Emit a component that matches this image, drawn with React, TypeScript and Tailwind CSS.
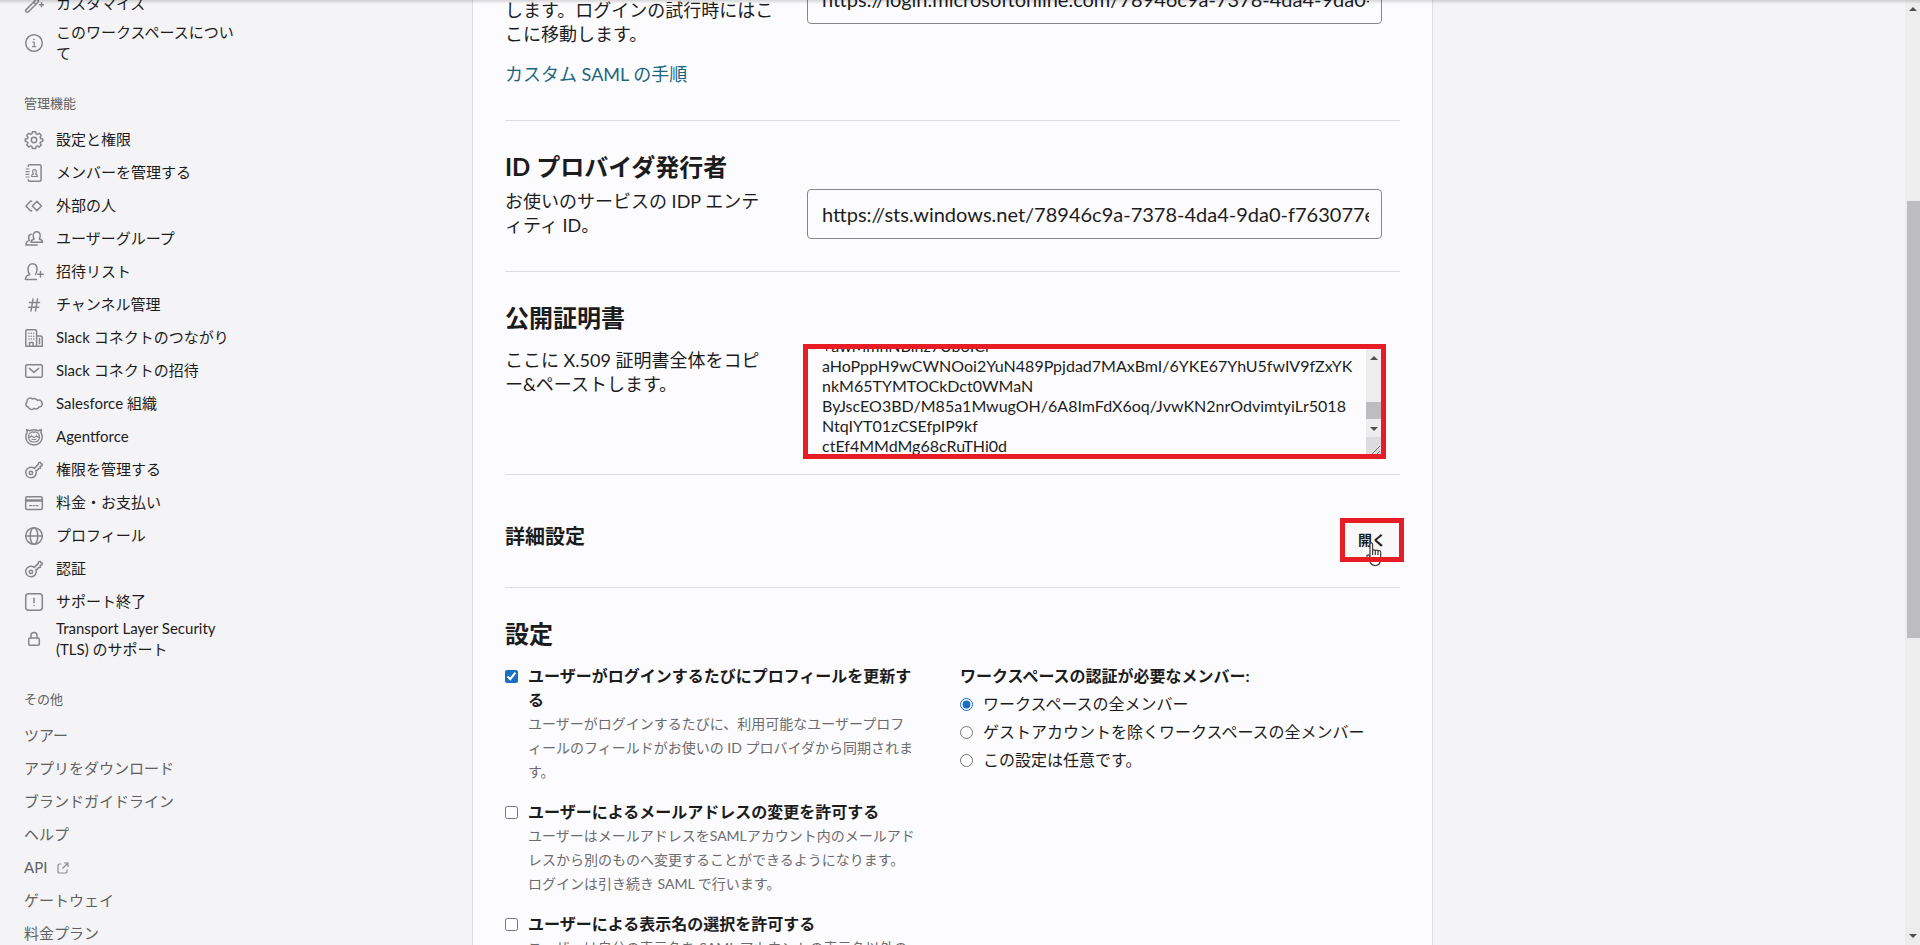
import React, { FunctionComponent, ReactNode } from "react";

interface IconProps {
  children: ReactNode;
}

const Icon: FunctionComponent<IconProps> = ({ children }) => (
  <svg
    viewBox="0 0 20 20"
    className="size-5 shrink-0 text-[#868688]"
    fill="none"
    stroke="currentColor"
    strokeWidth="1.5"
    strokeLinecap="round"
    strokeLinejoin="round"
    aria-hidden="true"
  >
    {children}
  </svg>
);

const keyIcon = (
  <Icon>
    <circle cx="6.9" cy="12.9" r="1.7" />
    <path d="M10.300 8.400 14.300 4.400l.2-1.500 1.800-.6.600 1.300 1.400.6-.6 1.800-1.500.2.200 2-2 .5-1 1.600-1.500.3a5.300 5.300 0 1 1-1.600-2.200" />
  </Icon>
);

const workspaceLinks = [
  {
    label: "カスタマイズ",
    icon: (
      <Icon>
        <path d="m2.2 15.6 9.6-9.6c.7-.7 1.6-.7 2.200 0s.7 1.500 0 2.200l-9.600 9.600c-.6.600-1.600.600-2.200 0s-.6-1.600 0-2.200ZM9.800 8l2.200 2.200" />
        <path d="M15.500 1v3M17.500 8.800v4M15.500 10.800h4M7 2.500v2" />
      </Icon>
    ),
  },
  {
    label: "このワークスペースについて",
    icon: (
      <Icon>
        <circle cx="10" cy="10" r="8.3" />
        <path d="M8.700 9h1.500v4.700M8.500 13.700h3.400" strokeWidth="1.200" />
        <circle cx="10" cy="6.400" r=".5" fill="currentColor" strokeWidth=".6" />
      </Icon>
    ),
  },
];

const adminLinks = [
  {
    label: "設定と権限",
    icon: (
      <Icon>
        <circle cx="10" cy="10" r="2.700" />
        <path d="M8.400 1.800h3.200l.5 2.100 1.200.5 1.900-1.100 2 2-1.100 1.900.5 1.200 2.100.5v2.400l-2.100.6-.5 1.200 1.100 1.900-2 2-1.900-1.100-1.200.5-.5 2.100H8.400l-.5-2.100-1.200-.5-1.900 1.100-2-2 1.100-1.900-.5-1.200-2.100-.6V8.900l2.100-.5.5-1.200-1.100-1.900 2-2 1.900 1.100 1.200-.5Z" />
      </Icon>
    ),
  },
  {
    label: "メンバーを管理する",
    icon: (
      <Icon>
        <path d="M4.200 3.300c0-.8.6-1.500 1.500-1.500h9.800c.9 0 1.600.7 1.600 1.500v13.400c0 .8-.7 1.500-1.600 1.500H5.700c-.9 0-1.500-.7-1.500-1.500" />
        <path d="M2 6h3M2 8.700h3M2 11.300h3M2 14h3" strokeWidth="1.200" />
        <path d="M7.500 13.500h6c0-1.500-1-2.200-2-2.600.6-.6.8-1.300.8-2.200 0-1.200-.7-2-1.800-2s-1.800.8-1.800 2c0 .9.200 1.600.8 2.200-1 .4-2 1.100-2 2.600Z" strokeWidth="1.200" />
      </Icon>
    ),
  },
  {
    label: "外部の人",
    icon: (
      <Icon>
        <path d="M7.700 5.200H6.400L2 10l4.400 4.800h1.300M12.800 5.400 8.300 10l4.500 4.600 4.700-4.600-4.700-4.600Z" />
      </Icon>
    ),
  },
  {
    label: "ユーザーグループ",
    icon: (
      <Icon>
        <path d="M10.200 10c-.7-1-1-2.100-1-3.300 0-2.400 1.300-4 3.500-4s3.500 1.600 3.500 4c0 1.200-.3 2.300-1 3.300 2.300.5 3.400 1.500 3.400 3.300H7c0-1.800 1-2.800 3.200-3.300Z" />
        <path d="M7.200 5.300C5.400 5.600 4.600 7 4.600 8.700c0 1 .2 1.900.8 2.700-2.300.7-3.500 2-3.500 4.500h11.300" />
      </Icon>
    ),
  },
  {
    label: "招待リスト",
    icon: (
      <Icon>
        <path d="M12.500 17.600H1.400c0-2.900 1.400-4.200 4.300-5C4.600 11.300 4 9.600 4 7.500 4 4.200 5.600 1.800 8.500 1.800S13 4.200 13 7.500c0 2-.5 3.600-1.500 4.900M13.700 12.300h5.600M16.500 9.500v5.600" />
      </Icon>
    ),
  },
  {
    label: "チャンネル管理",
    icon: (
      <Icon>
        <path d="M9 4 7 16M13.500 4l-2 12M5.500 7.600h10M4.700 12.200h10" />
      </Icon>
    ),
  },
  {
    label: "Slack コネクトのつながり",
    icon: (
      <Icon>
        <path d="M1.800 18.200V3.300c0-.8.700-1.500 1.500-1.500h7.800c.8 0 1.500.7 1.500 1.500v14.900H1.800ZM12.600 8h4.100c.8 0 1.500.7 1.500 1.500v8.700h-5.600" />
        <path d="M5.500 18v-3.500h3.600V18M15.500 10.500v5.200" />
        <path d="M5 5.300h.1M7.300 5.300h.1M9.600 5.300h.1M5 8.200h.1M7.300 8.200h.1M9.600 8.200h.1M5 11h.1M7.300 11h.1M9.600 11h.1" />
      </Icon>
    ),
  },
  {
    label: "Slack コネクトの招待",
    icon: (
      <Icon>
        <rect x="1.700" y="3.700" width="16.600" height="12.600" rx="1.600" />
        <path d="m5.400 7.400 4.600 4 4.600-4" />
      </Icon>
    ),
  },
  {
    label: "Salesforce 組織",
    icon: (
      <Icon>
        <path d="M8.300 5C6.300 3.200 2.700 4.300 3 7.800c-2 1.500-1.500 4.900 1.200 5.200 1 2.700 4.400 3.200 6 1.300 1.800 1.200 4 .5 4.700-1.300 2.800.3 4.200-3 2.800-5.200-1-1.700-2.800-2-4.200-1.400-1-1.800-3.700-2.400-5.200-1.400Z" />
      </Icon>
    ),
  },
  {
    label: "Agentforce",
    icon: (
      <Icon>
        <path d="M3.200 5.200 2.600 2.600l3 1.200c2.700-1.400 6.100-1.400 8.800 0l3-1.200-.6 2.600c1 1.300 1.400 3 1.400 4.800 0 4.600-3.400 8-8.200 8s-8.200-3.400-8.200-8c0-1.800.4-3.500 1.400-4.800Z" />
        <path d="M10 5.500c-1-1-5.500-.5-5.500 4.500 0 3.500 2.500 5 5.500 5s5.500-1.500 5.500-5c0-5-4.500-5.500-5.500-4.500ZM5.500 10.500c1-1.500 3-1.500 4 0M10.500 10.500c1-1.500 3-1.500 4 0M8 12.500h4M7.500 8h.1M12.500 8h.1" strokeWidth="1.200" />
      </Icon>
    ),
  },
  { label: "権限を管理する", icon: keyIcon },
  {
    label: "料金・お支払い",
    icon: (
      <Icon>
        <rect x="1.700" y="3.700" width="16.600" height="12.800" rx="1.600" />
        <path d="M2 6.900h16M2 8h16" />
        <path d="M5.500 12.700h2M9 12.700h1.500M12 12.700h2" strokeWidth="1.200" />
      </Icon>
    ),
  },
  {
    label: "プロフィール",
    icon: (
      <Icon>
        <circle cx="10" cy="10" r="8.300" />
        <ellipse cx="10" cy="10" rx="3.800" ry="8.300" />
        <path d="M1.700 10h16.600" />
      </Icon>
    ),
  },
  { label: "認証", icon: keyIcon },
  {
    label: "サポート終了",
    icon: (
      <Icon>
        <rect x="1.700" y="1.700" width="16.600" height="16.600" rx="3" />
        <path d="M10 6.300v4.500M10 13.500v.1" />
      </Icon>
    ),
  },
  {
    label: "Transport Layer Security (TLS) のサポート",
    icon: (
      <Icon>
        <rect x="4.700" y="9" width="10.600" height="7.200" rx="1.200" />
        <path d="M7 9V6.500c0-1.800 1.200-3 3-3s3 1.200 3 3V9" />
      </Icon>
    ),
  },
];

const otherLinks = [
  "ツアー",
  "アプリをダウンロード",
  "ブランドガイドライン",
  "ヘルプ",
  "API",
  "ゲートウェイ",
  "料金プラン",
];

const options = [
  {
    id: "update-profile",
    checked: true,
    title: "ユーザーがログインするたびにプロフィールを更新する",
    description:
      "ユーザーがログインするたびに、利用可能なユーザープロフ\nィールのフィールドがお使いの ID プロバイダから同期されま\nす。",
  },
  {
    id: "change-email",
    checked: false,
    title: "ユーザーによるメールアドレスの変更を許可する",
    description:
      "ユーザーはメールアドレスをSAMLアカウント内のメールアド\nレスから別のものへ変更することができるようになります。\nログインは引き続き SAML で行います。",
  },
  {
    id: "display-name",
    checked: false,
    title: "ユーザーによる表示名の選択を許可する",
    description: "ユーザーは自分の表示名を SAML アカウントの表示名以外の",
  },
];

const members = [
  "ワークスペースの全メンバー",
  "ゲストアカウントを除くワークスペースの全メンバー",
  "この設定は任意です。",
];

const certificate = `+awMmhNBihz7Ub6ICr
aHoPppH9wCWNOoi2YuN489Ppjdad7MAxBmI/6YKE67YhU5fwIV9fZxYK
nkM65TYMTOCkDct0WMaN
ByJscEO3BD/M85a1MwugOH/6A8ImFdX6oq/JvwKN2nrOdvimtyiLr5018
NtqIYT01zCSEfpIP9kf
ctEf4MMdMg68cRuTHi0d`;

const inputClass =
  "block w-full h-[50px] pl-3.5 pr-3 rounded border border-[#868686] bg-transparent text-xl outline-none";

const Highlight: FunctionComponent = () => (
  <span className="absolute -inset-1 border-[5px] border-[#e81c24] pointer-events-none" />
);

const Arrow: FunctionComponent<{ down?: boolean }> = ({ down }) => (
  <svg viewBox="0 0 8 4" className="w-2 h-1 shrink-0" fill="#505050" aria-hidden="true">
    <path d={down ? "M0 0h8L4 4Z" : "M0 4h8L4 0Z"} />
  </svg>
);

const Sidebar: FunctionComponent = () => (
  <nav className="w-[472px] shrink-0 pl-6 -mt-[13px] text-[15px] leading-[21px]">
    <div className="flex flex-col gap-0.5">
      {workspaceLinks.map((item) => (
        <a key={item.label} href="#" className="flex items-center gap-3 min-h-[33px]">
          {item.icon}
          <span className="w-[188px]">{item.label}</span>
        </a>
      ))}
    </div>
    <h4 className="mt-[29px] mb-2.5 text-[13px] leading-5 text-[#616061]">管理機能</h4>
    {adminLinks.map((item) => (
      <a key={item.label} href="#" className="flex items-center gap-3 min-h-[33px]">
        {item.icon}
        <span className="w-[188px]">{item.label}</span>
      </a>
    ))}
    <h4 className="mt-[29px] mb-2.5 text-[13px] leading-5 text-[#616061]">その他</h4>
    {otherLinks.map((label) => (
      <a key={label} href="#" className="flex items-center gap-2.5 h-[33px] text-[#616061]">
        {label}
        {label === "API" && (
          <svg viewBox="0 0 12 12" className="size-3" fill="none" stroke="#8b8b8d" strokeWidth="1.200" aria-hidden="true">
            <path d="M4.500 2H2.300C1.500 2 1 2.500 1 3.200v6.500c0 .7.500 1.300 1.300 1.300h6.400c.8 0 1.300-.6 1.300-1.300V7.500M7 1h4v4M11 1 5.500 6.500" />
          </svg>
        )}
      </a>
    ))}
  </nav>
);

const App: FunctionComponent = () => {
  return (
    <div
      lang="ja"
      className="relative flex h-screen overflow-hidden bg-[#f4f4f6] text-[#1d1c1d] font-[Lato,'Noto_Sans_CJK_JP',sans-serif]"
    >
      <Sidebar />

      <main className="w-[961px] shrink-0 h-full overflow-hidden px-8 border-x border-[#dfdfe1] bg-[#fcfcfe]">
        <section className="-mt-[26px] pb-[34px] border-b border-[#dddddf]">
          <div className="grid grid-cols-[270px_1fr] gap-8 pr-[18px]">
            <div className="pt-6 text-lg leading-6">
              <label htmlFor="sso-url">します。ログインの試行時にはここに移動します。</label>
              <a href="#" className="block mt-4 text-[#1d6580]">
                カスタム SAML の手順
              </a>
            </div>
            <div>
              <input
                id="sso-url"
                type="text"
                className={inputClass}
                defaultValue="https://login.microsoftonline.com/78946c9a-7378-4da4-9da0-f763077e"
              />
            </div>
          </div>
        </section>

        <section className="pt-[30px] pb-8 border-b border-[#dddddf]">
          <h3 className="mb-1.5 text-2xl leading-8 font-bold">ID プロバイダ発行者</h3>
          <div className="grid grid-cols-[270px_1fr] gap-8 pr-[18px]">
            <label htmlFor="issuer" className="text-lg leading-6">
              お使いのサービスの IDP エンティティ ID。
            </label>
            <input
              id="issuer"
              type="text"
              className={inputClass}
              defaultValue="https://sts.windows.net/78946c9a-7378-4da4-9da0-f763077e"
            />
          </div>
        </section>

        <section className="pt-[30px] pb-[19px] border-b border-[#dddddf]">
          <h3 className="mb-3.5 text-2xl leading-8 font-bold">公開証明書</h3>
          <div className="grid grid-cols-[270px_1fr] gap-8 pr-[18px]">
            <label htmlFor="certificate" className="text-lg leading-6">
              ここに X.509 証明書全体をコピー&amp;ペーストします。
            </label>
            <div className="relative">
              <div className="flex h-[107px] overflow-hidden border-l border-[#bbbbbb]">
                <textarea
                  id="certificate"
                  rows={6}
                  wrap="off"
                  className="flex-1 h-[120px] -mt-3 pl-3.5 resize-none overflow-hidden bg-transparent text-base leading-5 outline-none"
                  defaultValue={certificate}
                />
                <div className="flex flex-col w-4 bg-[#ededee]">
                  <div className="flex justify-center pt-2">
                    <Arrow />
                  </div>
                  <div className="mt-[42px] h-[17px] bg-[#bdbdbf]" />
                  <div className="flex justify-center pt-2">
                    <Arrow down />
                  </div>
                  <svg viewBox="0 0 16 18" className="mt-auto w-4 h-[18px] bg-[#dcdcde]" stroke="#77777a" aria-hidden="true">
                    <path d="m5 18 9-9M10 18l4-4" />
                  </svg>
                </div>
              </div>
              <Highlight />
            </div>
          </div>
        </section>

        <section className="flex items-start justify-between pt-[47px] pb-[29px] border-b border-[#dddddf]">
          <h4 className="text-xl leading-7 font-bold">詳細設定</h4>
          <div className="relative">
            <button type="button" className="block w-14 h-9 bg-[#f8f8f9] text-sm font-bold cursor-pointer">
              開く
            </button>
            <svg
              viewBox="0 0 18 24"
              className="absolute left-[22px] top-5 w-[18px] h-6 pointer-events-none"
              fill="#ffffff"
              stroke="#3c3c3e"
              strokeWidth="1.200"
              strokeLinejoin="round"
              aria-hidden="true"
            >
              <path d="M4 14V2.300c0-1.800 2.600-1.800 2.600 0V9c0-1.600 2.700-1.600 2.700.2 0-1.500 2.700-1.500 2.700.4 0-1.300 2.700-1.300 2.700.7v6.200c0 4-1.700 7-5.500 7-3 0-4.500-1.500-5.500-4.500L1 14.500c-.6-1.500 1.500-2.300 2.200-1L4 15ZM6.600 9v4M9.300 9.500V13M12 10v3" />
            </svg>
            <Highlight />
          </div>
        </section>

        <section className="pt-[30px]">
          <h3 className="mb-3.5 text-2xl leading-8 font-bold">設定</h3>
          <div className="grid grid-cols-[422px_1fr] gap-[33px] leading-6">
            <div className="flex flex-col gap-4">
              {options.map((option) => (
                <div key={option.id} className="flex items-start gap-2.5">
                  <input
                    id={option.id}
                    type="checkbox"
                    defaultChecked={option.checked}
                    className="size-[13px] mt-1.5 shrink-0 accent-[#1a6fc2]"
                  />
                  <div>
                    <label htmlFor={option.id} className="block font-bold">
                      {option.title}
                    </label>
                    <p className="text-sm leading-6 text-[#6c6b6d] whitespace-pre-line">{option.description}</p>
                  </div>
                </div>
              ))}
            </div>
            <fieldset>
              <legend className="mb-0.5 font-bold">ワークスペースの認証が必要なメンバー:</legend>
              {members.map((label, index) => (
                <label key={label} className="flex items-center gap-2.5 h-7">
                  <input
                    type="radio"
                    name="members"
                    defaultChecked={index === 0}
                    className="size-[13px] shrink-0 accent-[#1a6fc2]"
                  />
                  {label}
                </label>
              ))}
            </fieldset>
          </div>
        </section>
      </main>

      {/* page scrollbar */}
      <div className="flex flex-col items-center w-[15px] py-[7px] ml-auto bg-[#ededee]">
        <Arrow />
        <div className="flex-1 w-full pt-[190px] pl-0.5">
          <div className="h-[437px] bg-[#bdbcbe]" />
        </div>
        <Arrow down />
      </div>

      <div className="absolute inset-x-0 top-0 h-1 bg-linear-to-b from-black/15 to-transparent pointer-events-none" />
    </div>
  );
};

export default App;
